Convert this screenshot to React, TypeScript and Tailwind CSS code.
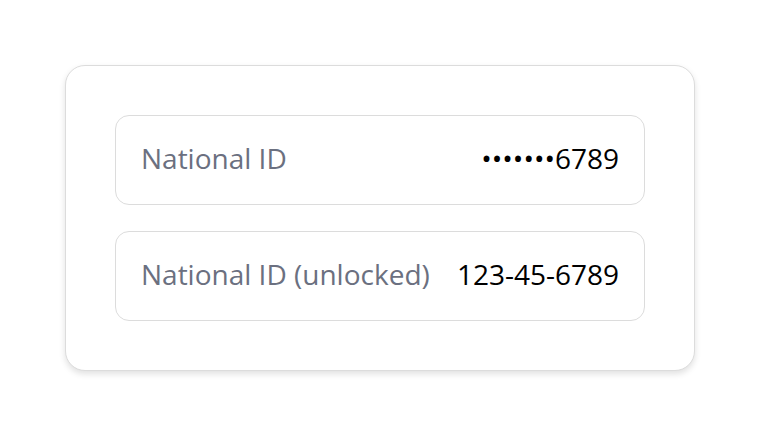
export default function App() {
  const rows = [
    { label: "National ID", value: "•••••••6789" },
    { label: "National ID (unlocked)", value: "123-45-6789" },
  ];

  return (
    <div className="flex min-h-screen items-start justify-center bg-white pt-[65px] font-['Open_Sans',sans-serif]">
      <div className="flex w-[630px] flex-col gap-[26px] rounded-[20px] border border-[#dcdcdc] bg-white p-[49px] shadow-[0_3px_6px_rgba(0,0,0,0.12)]">
        {rows.map((row) => (
          <div
            key={row.label}
            className="flex h-[90px] items-center justify-between rounded-[14px] border border-[#dcdcdc] bg-white px-[25px] pb-[4px]"
          >
            <span className="text-[28px] text-[#6b7080]">{row.label}</span>
            <span className="text-[28px] text-black">{row.value}</span>
          </div>
        ))}
      </div>
    </div>
  );
}
